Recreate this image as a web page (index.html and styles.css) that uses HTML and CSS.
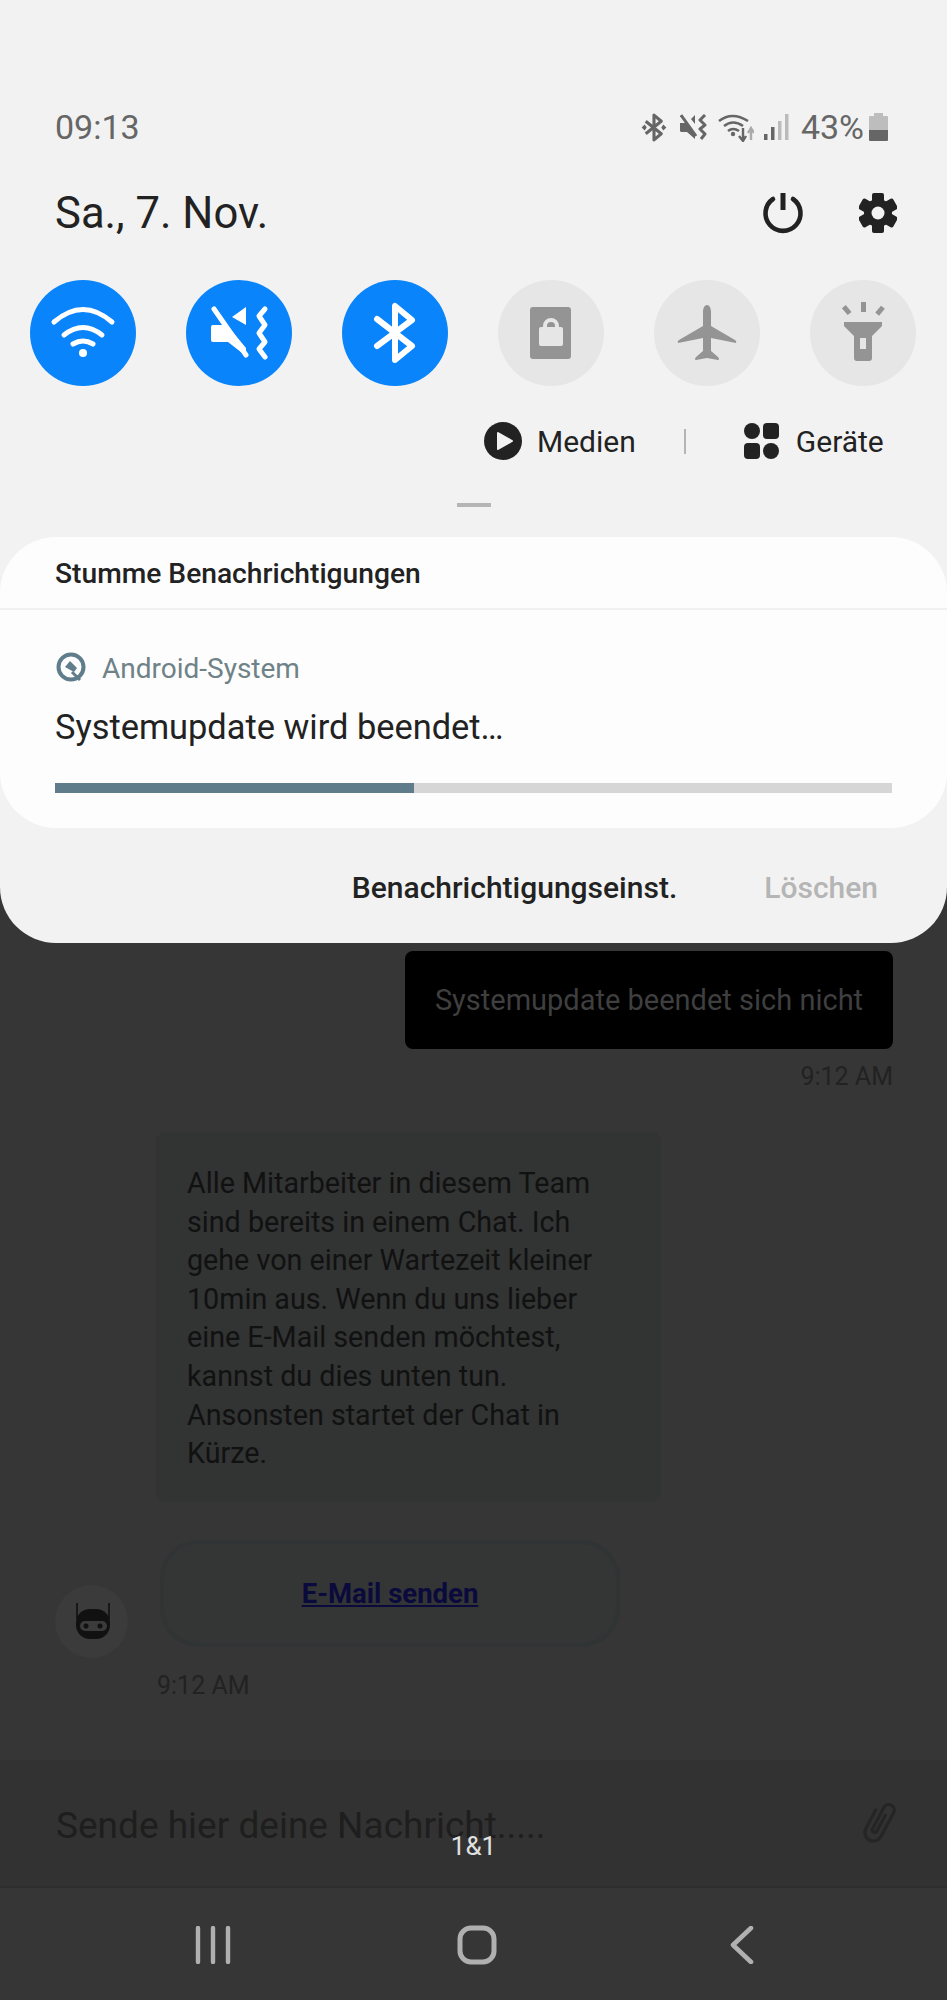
FILE: index.html
```html
<!DOCTYPE html>
<html lang="de">
<head>
    <meta charset="UTF-8">
    <meta name="viewport" content="width=device-width, initial-scale=1.0">
    <title>Benachrichtigungen</title>
    <link rel="stylesheet" href="styles.css">
</head>
<body>
    <div class="panel">
        <div class="status-row">
            <span class="clock">09:13</span>
            <div class="status-icons">
                <svg class="st-bt" width="26" height="29" viewBox="0 0 24 28"><path d="M4 20 L19 8 L12 2 V26 L19 20 L4 8" fill="none" stroke="#666" stroke-width="3" stroke-linejoin="round"/><path d="M0 14 L3 11 L5 14 L3 17Z M24 14 L21 11 L19 14 L21 17Z" fill="#666"/></svg>
                <svg class="st-mute" width="28" height="26" viewBox="0 0 28 26"><path d="M0 9 H7 L15 19 V25 L7 18 H1 L0 17Z M11 5 L15 1 V10Z" fill="#666"/><path d="M1 1 L16 22" stroke="#666" stroke-width="3"/><path d="M25 1 L20 6 L25 11 L20 15 L25 20 L21 25" fill="none" stroke="#666" stroke-width="3" stroke-linejoin="round"/></svg>
                <svg class="st-wifi" width="36" height="29" viewBox="0 0 36 29"><path d="M1 8 Q14 -2 30 8 M6 13 Q15 6 25 13 M10 18 Q15 14 21 18" fill="none" stroke="#666" stroke-width="2.6"/><circle cx="15" cy="21" r="2.2" fill="#666"/><path d="M25 15 V27 M21 23 L25 28 L28 23" fill="none" stroke="#666" stroke-width="2.4"/><path d="M33 27 V17 M30 20 L33 15 L36 20" fill="none" stroke="#aaa" stroke-width="2.4"/></svg>
                <svg class="st-signal" width="25" height="26" viewBox="0 0 25 26"><rect x="0" y="20" width="3.5" height="6" fill="#666"/><rect x="7" y="13" width="3.5" height="13" fill="#666"/><rect x="14" y="7" width="3.5" height="19" fill="#bbb"/><rect x="21" y="0" width="3.5" height="26" fill="#bbb"/></svg>
                <span class="percent">43%</span>
                <svg class="st-battery" width="19" height="28" viewBox="0 0 19 28"><path d="M5 0 H14 V3 H18 Q19 3 19 4 V17 H0 V4 Q0 3 1 3 H5Z" fill="#bdbdbd"/><path d="M0 17 H19 V27 Q19 28 18 28 H1 Q0 28 0 27Z" fill="#666"/></svg>
            </div>
        </div>

        <div class="date-row">
            <span class="date">Sa., 7. Nov.</span>
            <div class="date-actions">
                <svg class="power" width="40" height="40" viewBox="0 0 40 40"><path d="M10 6 A17.5 17.5 0 1 0 30 6" fill="none" stroke="#222" stroke-width="4.6" stroke-linecap="round"/><path d="M20 0 V17" stroke="#222" stroke-width="5"/></svg>
                <svg width="38" height="40" viewBox="0 0 38 40">
                    <g fill="#222">
                        <circle cx="19" cy="20" r="14"/>
                        <rect x="13" y="0" width="12" height="10" rx="2"/>
                        <rect x="13" y="0" width="12" height="10" rx="2" transform="rotate(60 19 20)"/>
                        <rect x="13" y="0" width="12" height="10" rx="2" transform="rotate(120 19 20)"/>
                        <rect x="13" y="0" width="12" height="10" rx="2" transform="rotate(180 19 20)"/>
                        <rect x="13" y="0" width="12" height="10" rx="2" transform="rotate(240 19 20)"/>
                        <rect x="13" y="0" width="12" height="10" rx="2" transform="rotate(300 19 20)"/>
                    </g>
                    <circle cx="19" cy="20" r="6.5" fill="#f2f2f2"/>
                </svg>
            </div>
        </div>

        <div class="quick-row">
            <div class="toggle on">
                <svg width="106" height="106" viewBox="0 0 106 106"><path d="M24 42 Q53 17 82 42 M34 55 Q53 40 72 55 M43 64 Q53 58 63 64" fill="none" stroke="#fff" stroke-width="5" stroke-linecap="round"/><circle cx="53" cy="73" r="4" fill="#fff"/></svg>
            </div>
            <div class="toggle on">
                <svg width="106" height="106" viewBox="0 0 106 106"><path d="M25 47 Q25 45 27 45 H41 L60 68 V76 L42 62 H27 Q25 62 25 60Z M46 37 L60 27 V45Z" fill="#fff"/><path d="M28 29 L60 75" stroke="#fff" stroke-width="5" stroke-linecap="round"/><path d="M79 29 L73 36 L79 45 L73 53 L79 62 L73 69 L79 77" fill="none" stroke="#fff" stroke-width="5" stroke-linecap="round" stroke-linejoin="round"/></svg>
            </div>
            <div class="toggle on">
                <svg width="106" height="106" viewBox="0 0 106 106"><path d="M35 66 L70 40 L53 26 V80 L70 66 L35 39" fill="none" stroke="#fff" stroke-width="6" stroke-linecap="round" stroke-linejoin="round"/></svg>
            </div>
            <div class="toggle">
                <svg width="106" height="106" viewBox="0 0 106 106"><rect x="32" y="27" width="41" height="52" rx="3" fill="#949494"/><rect x="41" y="47" width="24" height="19" rx="2" fill="#e6e6e6"/><path d="M47 48 V46 A6 6 0 0 1 59 46 V48" fill="none" stroke="#e6e6e6" stroke-width="4"/></svg>
            </div>
            <div class="toggle">
                <svg width="106" height="106" viewBox="0 0 106 106"><path d="M53 25 C50 25 49 29 49 32 V46 L25 60 Q23 61 24 63 L49 58 V71 L42 77 Q40 80 42 80 L53 78 L64 80 Q66 80 64 77 L57 71 V58 L82 63 Q83 61 81 60 L57 46 V32 C57 29 56 25 53 25Z" fill="#949494"/></svg>
            </div>
            <div class="toggle">
                <svg width="106" height="106" viewBox="0 0 106 106"><rect x="51" y="22" width="5" height="10" fill="#949494"/><rect x="34" y="26" width="5" height="9" fill="#949494" transform="rotate(-40 36 30)"/><rect x="68" y="26" width="5" height="9" fill="#949494" transform="rotate(40 70 30)"/><path d="M34 42 H72 V46 L62 56 V78 Q62 81 59 81 H47 Q44 81 44 78 V56 L34 46Z" fill="#949494"/><rect x="50" y="58" width="6" height="11" fill="#e6e6e6"/></svg>
            </div>
        </div>

        <div class="links-row">
            <div class="link-item media">
                <svg width="38" height="38" viewBox="0 0 38 38"><circle cx="19" cy="19" r="19" fill="#222"/><path d="M14 11 L28 19 L14 27Z" fill="#f2f2f2" stroke="#f2f2f2" stroke-width="2" stroke-linejoin="round"/></svg>
                <span>Medien</span>
            </div>
            <div class="link-sep"></div>
            <div class="link-item devices">
                <svg width="36" height="36" viewBox="0 0 36 36"><circle cx="8" cy="8" r="8" fill="#222"/><rect x="19" y="0" width="16" height="16" rx="4" fill="#222"/><rect x="0" y="20" width="16" height="16" rx="4" fill="#222"/><circle cx="27" cy="28" r="8" fill="#222"/></svg>
                <span>Geräte</span>
            </div>
        </div>

        <div class="handle"></div>

        <div class="card">
            <div class="card-header">Stumme Benachrichtigungen</div>
            <div class="card-app">
                <svg width="30" height="30" viewBox="0 0 30 30"><circle cx="15" cy="15" r="12.5" fill="none" stroke="#607d8b" stroke-width="4"/><path d="M14 9 L21 16 L18 20 L9 15Z" fill="#607d8b"/><path d="M16 20 L24 28" stroke="#607d8b" stroke-width="3"/></svg>
                <span>Android-System</span>
            </div>
            <div class="card-title">Systemupdate wird beendet…</div>
            <div class="progress"><div class="progress-fill"></div></div>
        </div>

        <div class="actions">
            <span class="action-main">Benachrichtigungseinst.</span>
            <span class="action-off">Löschen</span>
        </div>
    </div>

    <div class="chat">
        <div class="sent">Systemupdate beendet sich nicht</div>
        <div class="sent-time">9:12 AM</div>
        <div class="bot-msg">Alle Mitarbeiter in diesem Team sind bereits in einem Chat. Ich gehe von einer Wartezeit kleiner 10min aus. Wenn du uns lieber eine E-Mail senden möchtest, kannst du dies unten tun. Ansonsten startet der Chat in Kürze.</div>
        <div class="bot-row">
            <div class="avatar">
                <svg width="73" height="73" viewBox="0 0 73 73"><path d="M22 18 V34 M54 18 V34" stroke="#111" stroke-width="1.6"/><rect x="21" y="24" width="34" height="30" rx="14" fill="#111"/><rect x="25" y="36" width="27" height="10" rx="5" fill="#3b3b3b"/><circle cx="31" cy="41" r="2.5" fill="#111"/><circle cx="45" cy="41" r="2.5" fill="#111"/></svg>
            </div>
            <div class="bot-col">
                <div class="mail-btn"><a href="#">E-Mail senden</a></div>
                <div class="bot-time">9:12 AM</div>
            </div>
        </div>
    </div>

    <div class="input-bar">
        <span class="placeholder">Sende hier deine Nachricht.....</span>
        <svg class="clip" width="40" height="48" viewBox="0 0 40 48"><g transform="rotate(28 20 24)"><path d="M11 14 V35 A8.5 8.5 0 0 0 28 35 V8 A5.5 5.5 0 0 0 17 8 V32 A2.5 2.5 0 0 0 22 32 V14" fill="none" stroke="#252525" stroke-width="3.2" stroke-linecap="round"/></g></svg>
        <span class="carrier">1&amp;1</span>
    </div>

    <div class="nav-bar">
        <svg width="36" height="38" viewBox="0 0 36 38"><path d="M3 2 V36 M18 2 V36 M33 2 V36" stroke="#b0b0b0" stroke-width="4.4" stroke-linecap="round"/></svg>
        <svg class="nav-home" width="40" height="40" viewBox="0 0 40 40"><rect x="3" y="3" width="34" height="34" rx="11" fill="none" stroke="#b0b0b0" stroke-width="5"/></svg>
        <svg width="24" height="38" viewBox="0 0 24 38"><path d="M21 2 L3 19 L21 36" fill="none" stroke="#b0b0b0" stroke-width="4.6" stroke-linecap="round" stroke-linejoin="round"/></svg>
    </div>
</body>
</html>
```

FILE: styles.css
```css
* {
    box-sizing: border-box;
}
body {
    margin: 0;
    width: 947px;
    height: 2000px;
    overflow: hidden;
    background-color: #363636;
    font-family: Roboto, sans-serif;
}
svg {
    display: block;
    flex-shrink: 0;
}

/* quick panel */
.panel {
    height: 943px;
    padding-top: 105px;
    background-color: #f2f2f2;
    border-radius: 0 0 56px 56px;
}
.status-row {
    display: flex;
    justify-content: space-between;
    align-items: center;
    height: 44px;
    padding: 0 59px 0 55px;
}
.clock {
    font-size: 34px;
    color: #666;
}
.status-icons {
    display: flex;
    align-items: center;
}
.st-mute {
    margin-left: 13px;
}
.st-wifi {
    margin-left: 10px;
}
.st-signal {
    margin-left: 10px;
}
.percent {
    margin-left: 12px;
    font-size: 34px;
    color: #666;
}
.st-battery {
    margin-left: 5px;
}
.date-row {
    display: flex;
    justify-content: space-between;
    align-items: center;
    height: 50px;
    margin-top: 39px;
    padding: 0 50px 0 55px;
}
.date {
    font-size: 43.6px;
    color: #222;
}
.date-actions {
    display: flex;
    align-items: center;
    gap: 56px;
}
.power {
    overflow: visible;
}
.quick-row {
    display: flex;
    justify-content: space-between;
    margin-top: 42px;
    padding: 0 31px 0 30px;
}
.toggle {
    width: 106px;
    height: 106px;
    border-radius: 50%;
    background-color: #e6e6e6;
}
.toggle.on {
    background-color: #0a84fa;
}
.links-row {
    display: flex;
    align-items: center;
    height: 40px;
    margin-top: 35px;
    padding-left: 484px;
}
.link-item {
    display: flex;
    align-items: center;
    font-size: 30px;
    color: #222;
}
.media span {
    margin-left: 15px;
}
.devices span {
    margin-left: 16px;
}
.link-sep {
    width: 2px;
    height: 25px;
    margin: 0 58px 0 48px;
    background-color: #b5b5b5;
}
.handle {
    width: 34px;
    height: 4px;
    margin: 42px auto 0;
    background-color: #b5b5b5;
}

/* notification */
.card {
    height: 291px;
    margin-top: 30px;
    background-color: #fdfdfd;
    border-radius: 56px;
}
.card-header {
    height: 73px;
    padding: 0 55px;
    border-bottom: 2px solid #f0f0f0;
    font-size: 28.2px;
    font-weight: 500;
    line-height: 73px;
    color: #222;
}
.card-app {
    display: flex;
    align-items: center;
    gap: 16px;
    height: 30px;
    margin-top: 42px;
    padding-left: 56px;
    font-size: 28px;
    line-height: 34px;
    color: #6e8288;
}
.card-app span {
    padding-top: 3px;
}
.card-title {
    height: 40px;
    margin-top: 25px;
    padding-left: 55px;
    font-size: 34.4px;
    line-height: 40px;
    color: #222;
}
.progress {
    height: 10px;
    margin: 36px 55px 0;
    background-color: #d6d6d6;
}
.progress-fill {
    width: 359px;
    height: 100%;
    background-color: #5f7c8b;
}
.actions {
    display: flex;
    justify-content: flex-end;
    gap: 87px;
    height: 40px;
    margin-top: 40px;
    padding-right: 69px;
    font-size: 30px;
    font-weight: 500;
    line-height: 40px;
}
.action-main {
    color: #222;
}
.action-off {
    color: #b5b5b5;
}

/* chat behind the panel */
.chat {
    height: 817px;
    padding-top: 8px;
}
.sent {
    width: 488px;
    height: 98px;
    margin-left: 405px;
    background-color: #000;
    border-radius: 8px;
    font-size: 29px;
    line-height: 98px;
    text-align: center;
    color: #3f3f3f;
}
.sent-time {
    margin-top: 13px;
    padding-right: 54px;
    font-size: 25px;
    line-height: 30px;
    text-align: right;
    color: #222;
}
.bot-msg {
    width: 505px;
    height: 370px;
    margin: 40px 0 0 156px;
    padding: 32px 30px 0 31px;
    background-color: #323333;
    border-radius: 10px;
    font-size: 28.7px;
    line-height: 38.6px;
    color: #111;
}
.bot-row {
    display: flex;
    margin-top: 38px;
    padding-left: 55px;
}
.avatar {
    width: 73px;
    height: 73px;
    margin-top: 45px;
    border-radius: 50%;
    background-color: #3b3b3b;
}
.bot-col {
    margin-left: 32px;
}
.mail-btn {
    width: 460px;
    height: 107px;
    border: 4px solid #303434;
    border-radius: 38px;
    background-color: #343535;
    font-size: 27.5px;
    font-weight: 700;
    line-height: 99px;
    text-align: center;
}
.mail-btn a {
    color: #0a0a3c;
}
.bot-time {
    margin-top: 24px;
    margin-left: -3px;
    font-size: 25px;
    line-height: 30px;
    color: #222;
}

/* input and navigation */
.input-bar {
    position: relative;
    display: flex;
    justify-content: space-between;
    align-items: center;
    height: 128px;
    padding: 4px 48px 0 56px;
    background-color: #323232;
    border-bottom: 2px solid #2e2e2e;
}
.placeholder {
    font-size: 37px;
    color: #1e1e1e;
}
.clip {
    margin-top: -4px;
}
.carrier {
    position: absolute;
    left: 0;
    right: 0;
    top: 68px;
    font-size: 26px;
    line-height: 36px;
    text-align: center;
    color: #e0e0e0;
}
.nav-bar {
    display: flex;
    justify-content: space-between;
    align-items: center;
    height: 112px;
    padding: 2px 193px 0 195px;
}
.nav-home {
    margin-left: -8px;
}
```
